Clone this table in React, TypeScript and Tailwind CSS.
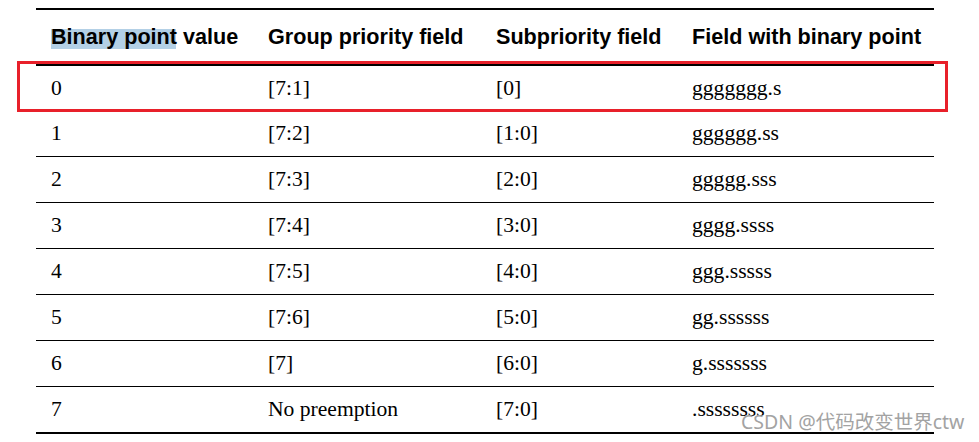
import React from "react";

const rows: [string, string, string, string][] = [
  ["0", "[7:1]", "[0]", "ggggggg.s"],
  ["1", "[7:2]", "[1:0]", "gggggg.ss"],
  ["2", "[7:3]", "[2:0]", "ggggg.sss"],
  ["3", "[7:4]", "[3:0]", "gggg.ssss"],
  ["4", "[7:5]", "[4:0]", "ggg.sssss"],
  ["5", "[7:6]", "[5:0]", "gg.ssssss"],
  ["6", "[7]", "[6:0]", "g.sssssss"],
  ["7", "No preemption", "[7:0]", ".ssssssss"],
];

const cols = "grid grid-cols-[217px_228px_196px_257px]";

export default function App() {
  return (
    <div className="relative w-[979px] h-[442px] bg-white overflow-hidden">
      <div className="ml-[36px] pt-[8px] w-[898px]">
        <div
          className={`${cols} h-[58px] border-t-2 border-b-2 border-black items-center font-bold text-black text-[21.6px]`}
          style={{ fontFamily: '"Liberation Sans", Arial, sans-serif' }}
        >
          <div className="pl-[15px] whitespace-nowrap">
            <span className="pr-[6px] mr-[-6px] bg-[linear-gradient(#b3d0e6,#b3d0e6)] bg-no-repeat bg-[length:100%_20px] bg-[position:0_100%]">
              Binary poin
            </span>
            t value
          </div>
          <div className="pl-[15px] whitespace-nowrap">Group priority field</div>
          <div className="pl-[15px] whitespace-nowrap">Subpriority field</div>
          <div className="pl-[15px] whitespace-nowrap">Field with binary point</div>
        </div>
        {rows.map((r, i) => (
          <div
            key={i}
            className={`${cols} ${i === 0 ? "h-[45px] border-b" : i === rows.length - 1 ? "h-[47px] border-b-2" : "h-[46px] border-b"} border-black items-center text-black text-[21.6px]`}
            style={{ fontFamily: '"Liberation Serif", "Times New Roman", serif' }}
          >
            {r.map((c, j) => (
              <div key={j} className="pl-[15px] whitespace-nowrap">
                {c}
              </div>
            ))}
          </div>
        ))}
      </div>
      <div className="absolute left-[17px] top-[61px] w-[931px] h-[51px] border-[3px] border-[#e8202a]" />
      <div
        className="absolute left-[741px] top-[410px] text-[19.5px] leading-[24px] text-[#a3a3a3] whitespace-nowrap"
        style={{ fontFamily: '"Noto Sans", "Noto Sans CJK SC", sans-serif' }}
      >
        CSDN @代码改变世界ctw
      </div>
    </div>
  );
}
